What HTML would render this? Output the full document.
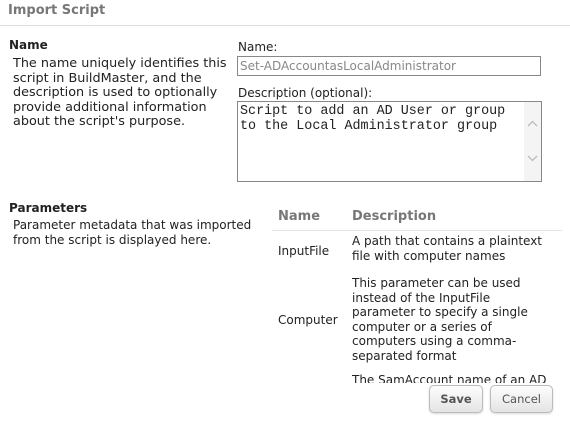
<!DOCTYPE html>
<html><head><style>
body{margin:0;width:570px;height:424px;background:#fff;position:relative;overflow:hidden;font-family:"DejaVu Sans","Liberation Sans",sans-serif;font-size:12px;color:#222}
.a{position:absolute;white-space:nowrap}
.b{font-weight:bold}
.p{line-height:14.5px}
.h{color:#777;font-weight:bold;font-size:13px}
.mono{font-family:"Liberation Mono",monospace;font-size:13.4px;line-height:15px}
.btn{position:absolute;top:385px;height:26px;border:1px solid #bbb;border-radius:5px;background:linear-gradient(#fdfdfd,#e4e4e4);box-shadow:0 1px 2px rgba(0,0,0,.15);text-align:center;line-height:26px;font-size:11.5px;color:#555}
</style></head><body>
<div class="a h" style="left:8px;top:3px">Import Script</div>
<div class="a" style="left:0;top:25px;width:570px;height:1px;background:#ddd"></div>
<div class="a b" style="left:9px;top:38px">Name</div>
<div class="a p" style="left:13px;top:57px;font-size:12.8px">The name uniquely identifies this<br>script in BuildMaster, and the<br>description is used to optionally<br>provide additional information<br>about the script's purpose.</div>
<div class="a" style="left:238px;top:40px">Name:</div>
<div class="a" style="left:237px;top:56px;border:1px solid #888;color:#888;line-height:18px;padding-left:2px;box-sizing:border-box;width:304px;height:20px">Set-ADAccountasLocalAdministrator</div>
<div class="a" style="left:238px;top:86px">Description (optional):</div>
<div class="a" style="left:237px;top:101px;width:305px;height:81px;border:1px solid #888;box-sizing:border-box">
<div class="a mono" style="left:2px;top:2px">Script to add an AD User or group<br>to the Local Administrator group</div>
<div class="a" style="right:0;top:0;width:17px;height:79px;background:#f4f4f4"></div>
<svg class="a" style="right:3px;top:18px" width="11" height="8"><path d="M1 6 L5.5 1.5 L10 6" fill="none" stroke="#bbb" stroke-width="1.3"/></svg>
<svg class="a" style="right:3px;top:52px" width="11" height="8"><path d="M1 2 L5.5 6.5 L10 2" fill="none" stroke="#bbb" stroke-width="1.3"/></svg>
</div>
<div class="a b" style="left:9px;top:201px">Parameters</div>
<div class="a p" style="left:13px;top:218px">Parameter metadata that was imported<br>from the script is displayed here.</div>
<div style="position:absolute;left:270px;top:200px;width:300px;height:183px;overflow:hidden">
<div class="a h" style="left:8px;top:9px">Name</div>
<div class="a h" style="left:82px;top:9px">Description</div>
<div class="a" style="left:2px;top:30px;width:290px;height:1px;background:#e4e4e4"></div>
<div class="a" style="left:8px;top:44px">InputFile</div>
<div class="a p" style="left:82px;top:34px">A path that contains a plaintext<br>file with computer names</div>
<div class="a" style="left:8px;top:113px">Computer</div>
<div class="a p" style="left:82px;top:76px">This parameter can be used<br>instead of the InputFile<br>parameter to specify a single<br>computer or a series of<br>computers using a comma-<br>separated format</div>
<div class="a p" style="left:82px;top:173px">The SamAccount name of an AD</div>
</div>
<div class="btn b" style="left:429px;width:52px">Save</div>
<div class="btn" style="left:490px;width:61px">Cancel</div>
</body></html>
